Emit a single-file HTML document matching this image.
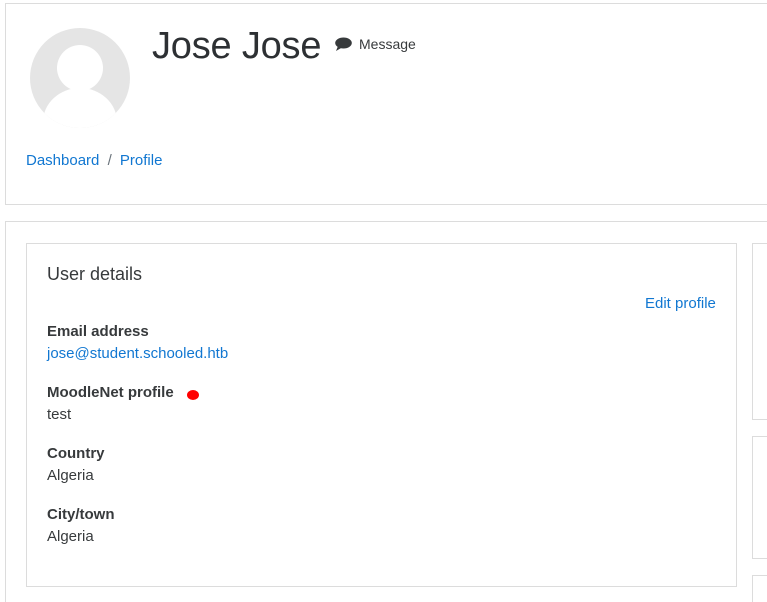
<!DOCTYPE html>
<html><head><style>
html,body{margin:0;background:#fff;width:767px;height:602px;overflow:hidden}
body{position:relative;font-family:"Liberation Sans",sans-serif;color:#373a3c}
.b{position:absolute;border:1px solid #dcdcdc;box-sizing:border-box;background:#fff}
.t{position:absolute;white-space:nowrap}
a{color:#1177d1;text-decoration:none}
.l{font-weight:bold;font-size:15px}
.v{font-size:15px}
</style></head><body>
<div class="b" style="left:5px;top:3px;width:762px;height:202px;border-right:none"></div>
<svg style="position:absolute;left:30px;top:28px" width="100" height="100" viewBox="0 0 100 100">
<clipPath id="c"><circle cx="50" cy="50" r="50"/></clipPath>
<circle cx="50" cy="50" r="50" fill="#e5e5e5"/>
<g clip-path="url(#c)" fill="#fff"><circle cx="50" cy="40" r="23"/><ellipse cx="50" cy="94" rx="37" ry="34"/></g>
</svg>
<div class="t" style="left:152px;top:25px;font-size:38px;color:#2d3033;letter-spacing:-0.2px">Jose Jose</div>
<svg style="position:absolute;left:335px;top:37px" width="17" height="14" viewBox="0 0 17 14"><ellipse cx="8.5" cy="6" rx="8.3" ry="5.5" fill="#373a3c"/><path d="M3 9 L1 14 L7 10.5Z" fill="#373a3c"/></svg>
<div class="t" style="left:359px;top:36px;font-size:14px">Message</div>
<div class="t" style="left:26px;top:152px;font-size:15px"><a>Dashboard</a> <span style="color:#6a737b;margin:0 4px">/</span> <a>Profile</a></div>
<div class="b" style="left:5px;top:221px;width:762px;height:381px;border-right:none;border-bottom:none"></div>
<div class="b" style="left:26px;top:243px;width:711px;height:344px"></div>
<div class="b" style="left:752px;top:243px;width:15px;height:177px;border-right:none"></div>
<div class="b" style="left:752px;top:436px;width:15px;height:123px;border-right:none"></div>
<div class="b" style="left:752px;top:575px;width:15px;height:27px;border-right:none;border-bottom:none"></div>
<div class="t" style="left:47px;top:264px;font-size:18px">User details</div>
<div class="t" style="left:645px;top:295px;font-size:15px"><a>Edit profile</a></div>
<div class="t l" style="left:47px;top:323px">Email address</div>
<div class="t v" style="left:47px;top:345px"><a>jose@student.schooled.htb</a></div>
<div class="t l" style="left:47px;top:384px">MoodleNet profile</div>
<div style="position:absolute;left:187px;top:390px;width:12px;height:10px;border-radius:50%;background:#f00"></div>
<div class="t v" style="left:47px;top:406px">test</div>
<div class="t l" style="left:47px;top:445px">Country</div>
<div class="t v" style="left:47px;top:467px">Algeria</div>
<div class="t l" style="left:47px;top:506px">City/town</div>
<div class="t v" style="left:47px;top:528px">Algeria</div>
</body></html>
